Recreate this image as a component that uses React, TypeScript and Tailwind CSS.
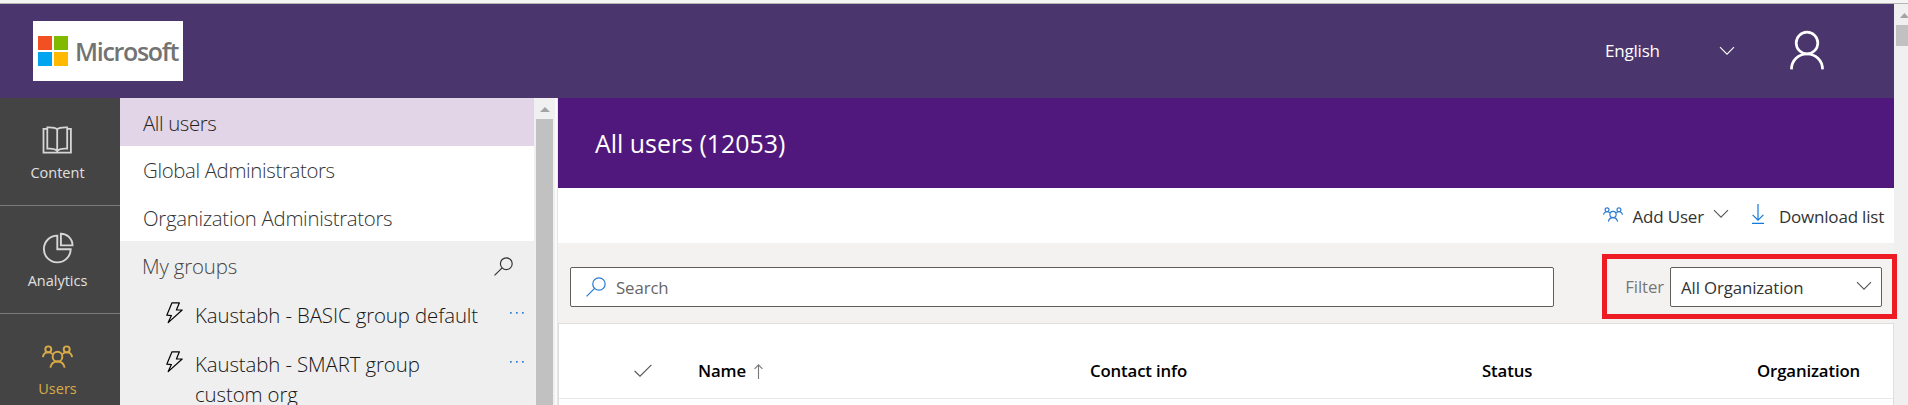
import React from 'react';

const ChevronDown = ({ className }: { className: string }) => (
  <svg viewBox="0 0 16 10" width="16" height="10" className={className} fill="none" stroke="currentColor" strokeWidth="1.1">
    <path d="M1 1.2 L8 8.2 L15 1.2" />
  </svg>
);

const Magnifier = ({ size, className }: { size: number; className: string }) => (
  <svg viewBox="0 0 21 21" width={size} height={size} className={className} fill="none" stroke="currentColor" strokeWidth="1.3">
    <circle cx="13.6" cy="7.4" r="6.5" />
    <path d="M9 12 L.6 20.4" />
  </svg>
);

const People = ({ width, stroke, className }: { width: number; stroke: number; className: string }) => (
  <svg viewBox="0 0 32 24" width={width} height={width * 0.75} className={className} fill="none" stroke="currentColor" strokeWidth={stroke}>
    <circle cx="6.5" cy="4.5" r="3.1" />
    <circle cx="25.5" cy="4.5" r="3.1" />
    <circle cx="16" cy="12" r="5" />
    <path d="M1 12.5 C1.2 9.4 3.6 7.6 6.5 7.6 C8.4 7.6 9.8 8.2 10.9 9.4" />
    <path d="M31 12.5 C30.8 9.4 28.4 7.6 25.5 7.6 C23.6 7.6 22.2 8.2 21.1 9.4" />
    <path d="M8.6 23.4 C9.4 19.4 12.2 17 16 17 C19.8 17 22.6 19.4 23.4 23.4" />
  </svg>
);

const Bolt = () => (
  <svg viewBox="0 0 17 22" width="17" height="22" className="mt-0.5 shrink-0" fill="none" stroke="#000" strokeWidth="1.2" strokeLinejoin="round">
    <path d="M6 .8 H13.4 L10.4 8 H16.2 L2.2 20.6 L5.4 13.6 L.8 13.2 Z" />
  </svg>
);

const BookIcon = () => (
  <svg viewBox="37.5 120 40 38" width="40" height="38" fill="none" stroke="#d6d6d6" strokeWidth="1.8">
    <path d="M47 128.8 H43 V152.6 H70.4 V128.8 H66.5" />
    <path d="M56.7 129.4 C55 127.5 51.5 127.2 46.8 127.4 V148.7 C51 148.4 55 148.8 56.7 151 C58.5 148.8 62.5 148.4 66.7 148.7 V127.4 C62 127.2 58.5 127.5 56.7 129.4 V152" />
  </svg>
);

const PieIcon = () => (
  <svg viewBox="37.5 228 40 38" width="40" height="38" fill="none" stroke="#d6d6d6" strokeWidth="1.9">
    <path d="M56.8 235.6 A13.4 13.4 0 1 0 70.2 249.2 H56.8 Z" />
    <path d="M60.4 233.8 V245.4 H72 A11.6 11.6 0 0 0 60.4 233.8 Z" />
  </svg>
);

const NavItem = ({ icon, label, active, divider }: { icon: React.ReactNode; label: string; active?: boolean; divider?: boolean }) => (
  <div className={`flex h-[108px] shrink-0 flex-col items-center pt-[22px] pr-[5px] ${divider ? 'border-b border-[#7a7a7a]' : ''}`}>
    <div className="flex h-[38px] items-center">{icon}</div>
    <span className={`mt-[5px] text-[14.5px] leading-5 ${active ? 'text-[#d9ab48]' : 'text-[#e0e0e0]'}`}>{label}</span>
  </div>
);

const GroupItem = ({ children }: { children: React.ReactNode }) => (
  <div className="flex min-h-[49px] items-start pt-[9px] pl-[46px] pr-2 text-[#161616]">
    <Bolt />
    <span className="ml-[12px] w-[290px] leading-[30px] tracking-[-0.1px]">{children}</span>
    <svg viewBox="0 0 16 4" width="16" height="4" className="mt-[11px] ml-[24px] shrink-0" fill="#2f7fd8">
      <rect x="1" y="1" width="1.7" height="1.7" />
      <rect x="7" y="1" width="1.7" height="1.7" />
      <rect x="13" y="1" width="1.7" height="1.7" />
    </svg>
  </div>
);

export default function App() {
  return (
    <div className="flex h-[405px] w-[1908px] flex-col overflow-hidden bg-white font-['Open_Sans','Noto_Sans',sans-serif]">
      <div className="h-1 shrink-0 border-b border-[#b5b5b5] bg-[#f4f4f4]" />
      <div className="flex min-h-0 flex-1">
        <div className="flex w-[1894px] shrink-0 flex-col">
          <header className="flex h-[94px] shrink-0 items-start justify-between bg-[#4a366c] text-white">
            <div className="mt-[17px] ml-[33px] flex h-[60px] w-[150px] items-center bg-white pl-[5px]">
              <svg viewBox="0 0 30 30" width="30" height="30">
                <path fill="#f25022" d="M0 0h14v14H0z" />
                <path fill="#7fba00" d="M16 0h14v14H16z" />
                <path fill="#00a4ef" d="M0 16h14v14H0z" />
                <path fill="#ffb900" d="M16 16h14v14H16z" />
              </svg>
              <span className="ml-[7px] text-[25px] leading-8 font-semibold tracking-[-1.3px] text-[#737373]">Microsoft</span>
            </div>
            <div className="flex h-[94px] items-center pr-[69px]">
              <span className="w-[114px] text-[17px] tracking-[-0.2px]">English</span>
              <ChevronDown className="text-white" />
              <svg viewBox="0 0 36 40" width="36" height="40" className="-mt-0.5 ml-[54px]" fill="none" stroke="currentColor" strokeWidth="2.7">
                <circle cx="18" cy="13" r="10.8" />
                <path d="M2.4 39.4 C2.6 30 9.4 24 18 24 C26.6 24 33.4 30 33.6 39.4" />
              </svg>
            </div>
          </header>
          <div className="flex min-h-0 flex-1">
            <nav className="flex w-[120px] shrink-0 flex-col overflow-hidden bg-[#444444]">
              <NavItem icon={<BookIcon />} label="Content" divider />
              <NavItem icon={<PieIcon />} label="Analytics" divider />
              <NavItem icon={<People width={31} stroke={2} className="mt-1 text-[#d9ab48]" />} label="Users" active />
            </nav>
            <aside className="flex w-[414px] shrink-0 flex-col overflow-hidden bg-white text-[20.4px] font-light text-[#333]">
              <div className="flex h-12 shrink-0 items-center bg-[#e1d5e7] pt-0.5 pl-[23px] tracking-[-0.4px] text-[#1f1f1f]">All users</div>
              <div className="flex h-[47px] shrink-0 items-center pt-0.5 pl-[23px] tracking-[-0.35px]">Global Administrators</div>
              <div className="flex h-12 shrink-0 items-center pt-0.5 pl-[23px] tracking-[-0.3px]">Organization Administrators</div>
              <div className="min-h-0 flex-1 bg-[#efefef]">
                <div className="flex h-[50px] items-center justify-between pr-[21px] pl-[22px] tracking-[-0.15px] text-[#444]">
                  <span>My groups</span>
                  <Magnifier size={19} className="text-[#333]" />
                </div>
                <GroupItem>Kaustabh - BASIC group default</GroupItem>
                <GroupItem>
                  Kaustabh - SMART group
                  <br />
                  custom org
                </GroupItem>
              </div>
            </aside>
            <div className="flex w-[21px] shrink-0 flex-col items-center bg-[#f0f0f0]">
              <svg viewBox="0 0 10 5" width="10" height="5" className="mt-[9px] shrink-0" fill="#a3a3a3">
                <path d="M5 0 L10 5 H0 Z" />
              </svg>
              <div className="mt-[7px] w-[17px] flex-1 bg-[#c1c1c1]" />
            </div>
            <div className="w-[3px] shrink-0 border-r border-[#e6e6e6] bg-[#fafafa]" />
            <main className="flex min-w-0 flex-1 flex-col">
              <h1 className="flex h-[90px] shrink-0 items-center bg-[#50187c] pt-0.5 pl-[37px] text-[24.9px] font-normal text-white">All users (12053)</h1>
              <div className="flex h-[55px] shrink-0 items-center justify-end pt-[3px] pr-[10px] text-[17px] tracking-[-0.2px] text-[#333]">
                <People width={20} stroke={1.9} className="-mt-1.5 text-[#2b7cd3]" />
                <span className="ml-[10px]">Add User</span>
                <ChevronDown className="-mt-1.5 ml-[9px] text-[#555]" />
                <svg viewBox="0 0 12 20" width="12" height="20" className="-mt-1.5 ml-[23px]" fill="none" stroke="#0f7bdc" strokeWidth="1.2">
                  <path d="M6 0 V16 M.6 10.8 L6 16.2 L11.4 10.8 M0 19.4 H12" />
                </svg>
                <span className="ml-[15px]">Download list</span>
              </div>
              <div className="relative flex h-20 shrink-0 items-center justify-between bg-[#f3f2f1] pt-2 pr-3 pl-3">
                <div className="flex h-10 w-[984px] items-center rounded-[2px] border border-[#605e5c] bg-white pl-[15px] text-[16.8px] tracking-[-0.1px] text-[#666]">
                  <Magnifier size={20} className="text-[#2b7cd3]" />
                  <span className="mt-0.5 ml-[10px]">Search</span>
                </div>
                <div className="flex items-center text-[16.8px] tracking-[-0.1px]">
                  <span className="text-[#777]">Filter</span>
                  <div className="ml-[6px] flex h-10 w-[212px] items-center justify-between rounded-[2px] border border-[#605e5c] bg-white pr-[9px] pl-[10px] text-[#333]">
                    <span className="mt-0.5">All Organization</span>
                    <ChevronDown className="-mt-0.5 text-[#555]" />
                  </div>
                </div>
                <div className="absolute top-[11px] left-[1044px] h-[65px] w-[295px] border-5 border-[#ed1c24]" />
              </div>
              <div className="min-h-0 flex-1 border border-b-0 border-[#dedede] bg-white">
                <div className="flex h-[75px] items-center border-b border-[#e8e8e8] pt-[20px] text-[16.8px] font-semibold tracking-[-0.15px] text-black">
                  <div className="w-[139px] shrink-0 pl-[75px]">
                    <svg viewBox="0 0 18 13" width="18" height="13" className="-mt-0.5" fill="none" stroke="#555" strokeWidth="1.1">
                      <path d="M.6 7 L6 12.2 L17.4 .8" />
                    </svg>
                  </div>
                  <div className="flex w-[392px] shrink-0 items-center">
                    <span>Name</span>
                    <svg viewBox="0 0 9 15" width="9" height="15" className="ml-2" fill="none" stroke="#777" strokeWidth="1.1">
                      <path d="M4.5 15 V1 M.6 4.8 L4.5 .9 L8.4 4.8" />
                    </svg>
                  </div>
                  <div className="w-[392px] shrink-0">Contact info</div>
                  <div className="w-[275px] shrink-0">Status</div>
                  <div>Organization</div>
                </div>
              </div>
            </main>
          </div>
        </div>
        <div className="flex w-[14px] shrink-0 flex-col items-end bg-[#f0f0f0]">
          <svg viewBox="0 0 8 5" width="8" height="5" className="mt-[9px]" fill="#a3a3a3">
            <path d="M4.5 0 L9 5 H0 Z" />
          </svg>
          <div className="mt-[7px] h-[21px] w-3 bg-[#c1c1c1]" />
        </div>
      </div>
    </div>
  );
}
